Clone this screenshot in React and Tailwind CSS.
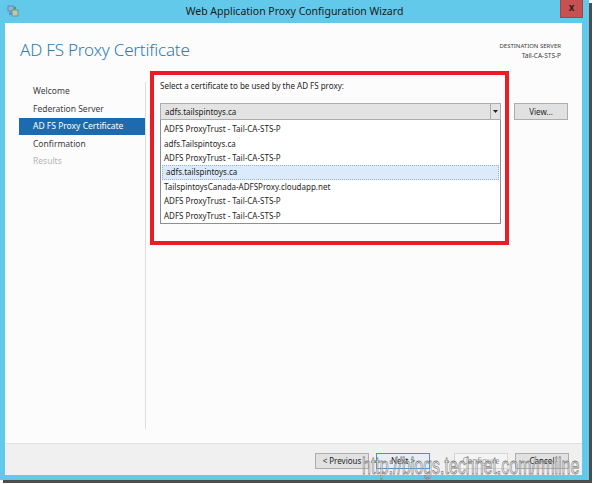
import React from "react";

const listItems = [
  "ADFS ProxyTrust - Tail-CA-STS-P",
  "adfs.Tailspintoys.ca",
  "ADFS ProxyTrust - Tail-CA-STS-P",
  "adfs.tailspintoys.ca",
  "TailspintoysCanada-ADFSProxy.cloudapp.net",
  "ADFS ProxyTrust - Tail-CA-STS-P",
  "ADFS ProxyTrust - Tail-CA-STS-P",
];

const navItems = [
  { label: "Welcome", state: "normal" },
  { label: "Federation Server", state: "normal" },
  { label: "AD FS Proxy Certificate", state: "selected" },
  { label: "Confirmation", state: "normal" },
  { label: "Results", state: "disabled" },
];

function WizardIcon() {
  return (
    <svg width="12" height="12" viewBox="0 0 12 12">
      <rect x="1" y="1" width="6" height="5" fill="#8fb3d9" stroke="#5a7fa8" strokeWidth="0.8" />
      <rect x="5" y="5" width="6" height="6" fill="#b7c9b0" stroke="#6f8b68" strokeWidth="0.8" />
      <rect x="2" y="7" width="3" height="3" fill="#5d8fcf" />
      <rect x="7" y="2" width="2" height="2" fill="#4a9a4a" />
    </svg>
  );
}

function Button({ children, variant = "normal" }) {
  const base =
    "w-[54px] h-[16px] flex items-center justify-center text-[8px] leading-none border";
  if (variant === "default")
    return (
      <div className={`${base} bg-[#e8edf3] border-[#4f8fcf] text-[#1e1e1e]`}>{children}</div>
    );
  if (variant === "disabled")
    return (
      <div className={`${base} bg-[#f4f4f4] border-[#d6d6d6] text-[#a2a2a2]`}>{children}</div>
    );
  return (
    <div className={`${base} bg-[#e1e1e1] border-[#adadad] text-[#1e1e1e]`}>{children}</div>
  );
}

export default function App() {
  return (
    <div className="w-[595px] h-[484px] bg-white relative overflow-hidden font-['Noto_Sans','Liberation_Sans',sans-serif]">
      {/* Window */}
      <div className="w-[589px] h-[480px] bg-[#62c9ea] flex flex-col shadow-[3px_3px_0_#4d4d4d] relative">
        {/* Title bar */}
        <div className="h-[23px] flex items-center justify-center relative shrink-0">
          <div className="absolute left-[7px] top-[5px]">
            <WizardIcon />
          </div>
          <span className="text-[10.5px] text-[#1a1a1a] leading-none pb-[1px]">
            Web Application Proxy Configuration Wizard
          </span>
          <div className="absolute right-[6px] top-0 w-[23px] h-[18px] bg-[#c75050] border border-[#a84343] border-t-0 flex items-center justify-center">
            <span className="text-[10px] font-bold text-[#1a1a1a] leading-none font-['Liberation_Sans',sans-serif] -mt-[1px]">
              x
            </span>
          </div>
        </div>

        {/* Client area */}
        <div className="flex-1 ml-[5px] mr-[7px] flex flex-col bg-[#fcfcfc]">
          {/* White upper region */}
          <div className="flex-1 flex flex-col">
            {/* Header */}
            <div className="flex justify-between items-start pl-[15px] pr-[21px] pt-[15px] h-[59px]">
              <h1 className="text-[17px] font-light text-[#2f7cb0] leading-[24px] tracking-[-0.2px]">
                AD FS Proxy Certificate
              </h1>
              <div className="flex flex-col items-end pt-[4px] text-[#3a3a3a]">
                <span className="text-[6px] leading-[9px]">DESTINATION SERVER</span>
                <span className="text-[6.5px] leading-[9px]">Tail-CA-STS-P</span>
              </div>
            </div>

            {/* Body */}
            <div className="flex h-[347px]">
              {/* Nav */}
              <div className="w-[126px] ml-[14px] pt-[1px] flex flex-col">
                {navItems.map((it) => (
                  <div
                    key={it.label}
                    className={
                      "h-[17.4px] flex items-center pl-[14px] text-[8.5px] leading-none " +
                      (it.state === "selected"
                        ? "bg-[#1c6bb0] text-white"
                        : it.state === "disabled"
                        ? "text-[#b4b4b4]"
                        : "text-[#3c3c3c]")
                    }
                  >
                    {it.label}
                  </div>
                ))}
              </div>
              {/* Divider */}
              <div className="w-[1px] bg-[#dedede] h-full" />

              {/* Right content */}
              <div className="flex-1 pl-[14px] -mt-[2px] flex flex-col">
                <div className="text-[8px] text-[#1e1e1e] leading-[12px]">
                  Select a certificate to be used by the AD FS proxy:
                </div>
                <div className="flex items-start mt-[11px]">
                  <div className="w-[341px] flex flex-col">
                    {/* Combo */}
                    <div className="h-[17px] flex border border-[#acacac] bg-[#e3e3e3]">
                      <div className="flex-1 flex items-center pl-[4px] text-[8px] text-[#1e1e1e] leading-none">
                        adfs.tailspintoys.ca
                      </div>
                      <div className="w-[10px] border-l border-[#acacac] flex items-center justify-center">
                        <svg width="5" height="3" viewBox="0 0 5 3">
                          <path d="M0 0 L5 0 L2.5 3 Z" fill="#222" />
                        </svg>
                      </div>
                    </div>
                    {/* List */}
                    <div className="h-[104px] border border-t-0 border-[#8e8f8f] bg-white flex flex-col pt-[2px]">
                      {listItems.map((t, i) => (
                        <div
                          key={i}
                          className={
                            "h-[14.6px] flex items-center pl-[3px] text-[8px] text-[#1e1e1e] leading-none " +
                            (i === 3
                              ? "bg-[#dcebfb] border border-dotted border-[#8fb2dc] mx-[1px] pl-[2px]"
                              : "")
                          }
                        >
                          {t}
                        </div>
                      ))}
                    </div>
                  </div>
                  <div className="ml-[13px]">
                    <div className="w-[54px] h-[17px] flex items-center justify-center text-[8px] leading-none border bg-[#e1e1e1] border-[#adadad] text-[#1e1e1e]">
                      View...
                    </div>
                  </div>
                </div>
              </div>
            </div>
          </div>

          {/* Bottom button bar */}
          <div className="h-[32px] shrink-0 border-t border-[#dfdfdf] bg-[#f0f0f0] flex items-start pt-[9px] pl-[310px] gap-[7px]">
            <Button>&lt; Previous</Button>
            <Button variant="default">Next &gt;</Button>
            <div className="ml-[17px]">
              <Button variant="disabled">Configure</Button>
            </div>
            <Button>Cancel</Button>
          </div>
        </div>
        <div className="h-[5px] shrink-0" />
      </div>

      {/* Red annotation box */}
      <div className="absolute left-[150px] top-[71px] w-[359px] h-[174px] border-[4px] border-[#ec1c24] pointer-events-none" />

      {/* Watermark */}
      <div className="absolute left-[362px] top-[452px] origin-left scale-x-[0.665] whitespace-nowrap text-[24px] leading-[28px] font-['Liberation_Sans',sans-serif] text-white/40 [-webkit-text-stroke:0.8px_#7d7d7d]">
        http://blogs.technet.com/rmilne
      </div>
    </div>
  );
}
